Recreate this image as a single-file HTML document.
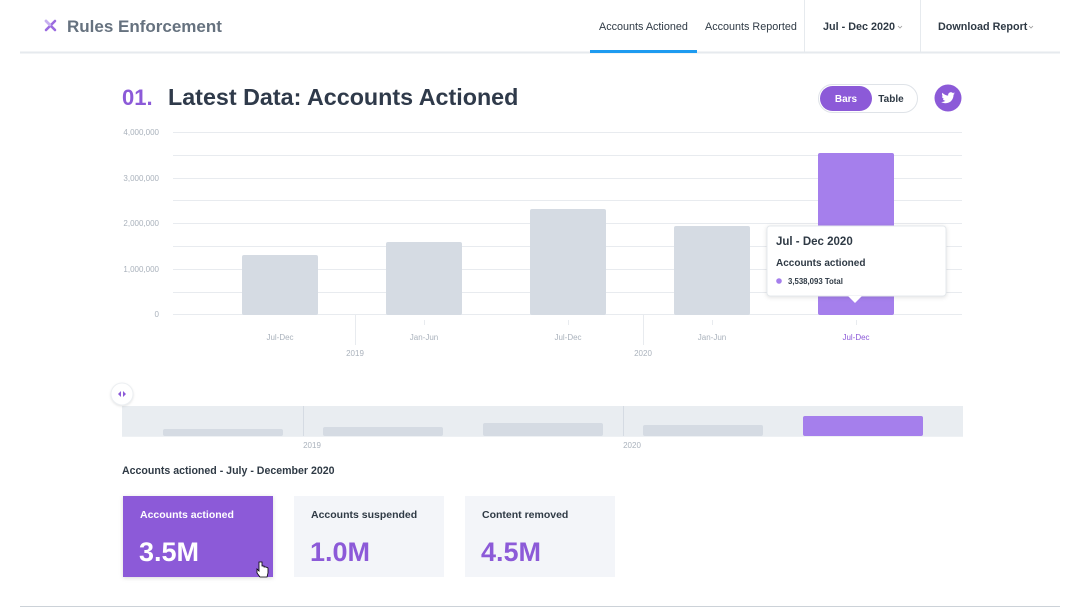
<!DOCTYPE html>
<html><head><meta charset="utf-8"><style>
body{margin:0;width:1080px;height:608px;background:#fff;font-family:"Liberation Sans",Arial,sans-serif;position:relative;overflow:hidden}
.a{position:absolute}
</style></head><body>
<svg class="a" style="left:0;top:0" width="1080" height="608">
<line x1="20" y1="52.5" x2="1060" y2="52.5" stroke="#e6eaee" stroke-width="2"/>
<rect x="590" y="50" width="107" height="3" fill="#1d9bf0"/>
<line x1="804.5" y1="0" x2="804.5" y2="52" stroke="#e6eaee"/>
<line x1="920.5" y1="0" x2="920.5" y2="52" stroke="#e6eaee"/>
<path d="M46 21 L55 30 M55 21 L46 30" stroke="#9b6be0" stroke-width="2.6" stroke-linecap="round"/>
<path d="M46 21 L50 25" stroke="#c7b0f0" stroke-width="2.6" stroke-linecap="round"/>
<text x="67" y="32" font-size="17" font-weight="bold" fill="#66727f">Rules Enforcement</text>
<text x="599" y="30" font-size="10.8" fill="#2f3a45">Accounts Actioned</text>
<text x="705" y="30" font-size="10.8" fill="#2f3a45">Accounts Reported</text>
<text x="823" y="30" font-size="10.8" font-weight="bold" fill="#2f3a45">Jul - Dec 2020</text>
<path d="M898 26 l2 2 l2 -2" stroke="#999" fill="none" stroke-width="0.8"/>
<text x="938" y="30" font-size="10.8" font-weight="bold" fill="#2f3a45">Download Report</text>
<path d="M1029 26 l2 2 l2 -2" stroke="#999" fill="none" stroke-width="0.8"/>
<text x="122" y="105" font-size="22" font-weight="bold" fill="#8c5ad8">01.</text>
<text x="168" y="105" font-size="23.3" font-weight="bold" fill="#2f3a4a">Latest Data: Accounts Actioned</text>
<rect x="818.5" y="84.5" width="99" height="28" rx="14" fill="#fff" stroke="#dfe3e8"/>
<rect x="820" y="86" width="52" height="25" rx="12.5" fill="#8c5ad8"/>
<text x="846" y="102" font-size="10" font-weight="bold" fill="#fff" text-anchor="middle">Bars</text>
<text x="891" y="102" font-size="10" font-weight="bold" fill="#2f3a45" text-anchor="middle">Table</text>
<circle cx="948" cy="98" r="13.5" fill="#8c5ad8"/>
<path d="M955 93.5c-.5.2-1 .4-1.6.4.6-.4 1-.9 1.2-1.5-.5.3-1.100.5-1.7.7-.5-.6-1.2-.9-2-.9-1.500 0-2.800 1.200-2.800 2.800 0 .2 0 .4.1.6-2.300-.1-4.400-1.200-5.800-2.900-.2.4-.4.9-.4 1.400 0 1 .5 1.800 1.200 2.300-.5 0-.9-.1-1.300-.3 0 1.400 1 2.500 2.200 2.700-.4.1-.9.2-1.300.1.4 1.100 1.400 1.900 2.600 1.900-1 .8-2.200 1.200-3.500 1.200h-.7c1.200.8 2.700 1.200 4.300 1.200 5.200 0 8-4.300 8-8v-.4c.6-.4 1-.9 1.400-1.400z" fill="#fff"/>
<g stroke="#e8ebef" stroke-width="1">
<line x1="173" y1="132.5" x2="962" y2="132.5"/><line x1="173" y1="155.5" x2="962" y2="155.5"/>
<line x1="173" y1="178.5" x2="962" y2="178.5"/><line x1="173" y1="200.5" x2="962" y2="200.5"/>
<line x1="173" y1="223.5" x2="962" y2="223.5"/><line x1="173" y1="246.5" x2="962" y2="246.5"/>
<line x1="173" y1="269.5" x2="962" y2="269.5"/><line x1="173" y1="292.5" x2="962" y2="292.5"/>
<line x1="173" y1="314.5" x2="962" y2="314.5"/>
<line x1="355.5" y1="315" x2="355.5" y2="345"/><line x1="643.5" y1="315" x2="643.5" y2="345"/>
<line x1="424.5" y1="320" x2="424.5" y2="325"/><line x1="568.5" y1="320" x2="568.5" y2="325"/><line x1="712.5" y1="320" x2="712.5" y2="325"/><line x1="856.5" y1="320" x2="856.5" y2="325"/>
</g>
<svg x="122" y="120" width="50" height="210"><g font-size="8" fill="#aab2bc" text-anchor="end">
<text x="37" y="15">4,000,000</text><text x="37" y="61">3,000,000</text><text x="37" y="106">2,000,000</text><text x="37" y="152">1,000,000</text><text x="37" y="197">0</text></g></svg>
<g fill="#d5dbe3">
<rect x="242" y="255" width="76" height="60" rx="2"/>
<rect x="386" y="242" width="76" height="73" rx="2"/>
<rect x="530" y="209" width="76" height="106" rx="2"/>
<rect x="674" y="226" width="76" height="89" rx="2"/>
</g>
<rect x="818" y="153" width="76" height="162" rx="2" fill="#a57fec"/>
<g font-size="8" fill="#aab2bc" text-anchor="middle">
<text x="280" y="340">Jul-Dec</text><text x="424" y="340">Jan-Jun</text><text x="568" y="340">Jul-Dec</text><text x="712" y="340">Jan-Jun</text>
<text x="856" y="340" fill="#8c5ad8">Jul-Dec</text>
<text x="355" y="356">2019</text><text x="643" y="356">2020</text>
</g>
<rect x="767" y="226" width="179" height="70" rx="3" fill="#fff" stroke="#e4e8ec" filter="drop-shadow(0 1px 2px rgba(0,0,0,.12))"/>
<path d="M848 296 l7 7 l7 -7z" fill="#fff"/>
<text x="776" y="245" font-size="11.5" font-weight="bold" fill="#2f3a45">Jul - Dec 2020</text>
<text x="776" y="266" font-size="10" font-weight="bold" fill="#2f3a45">Accounts actioned</text>
<circle cx="779" cy="281" r="2.8" fill="#a57fec"/>
<text x="788" y="284" font-size="7.8" font-weight="bold" fill="#2f3a45">3,538,093 Total</text>
<rect x="122" y="406" width="841" height="30" fill="#e9edf1"/>
<line x1="303.5" y1="406" x2="303.5" y2="436" stroke="#d5dbe3"/>
<line x1="623.5" y1="406" x2="623.5" y2="436" stroke="#d5dbe3"/>
<g fill="#d5dbe3"><rect x="163" y="429" width="120" height="7" rx="2"/><rect x="323" y="427" width="120" height="9" rx="2"/><rect x="483" y="423" width="120" height="13" rx="2"/><rect x="643" y="425" width="120" height="11" rx="2"/></g>
<rect x="803" y="416" width="120" height="20" rx="2" fill="#a57fec"/>
<line x1="122" y1="436.5" x2="963" y2="436.5" stroke="#eef1f4"/>
<circle cx="122" cy="394" r="11" fill="#fff" stroke="#eceff2" filter="drop-shadow(0 1px 1px rgba(0,0,0,.1))"/>
<path d="M118 394 l3 -3 v6z M126 394 l-3 -3 v6z" fill="#8c5ad8"/>
<text x="312" y="448" font-size="8" fill="#aab2bc" text-anchor="middle">2019</text>
<text x="632" y="448" font-size="8" fill="#aab2bc" text-anchor="middle">2020</text>
<text x="122" y="474" font-size="10.6" font-weight="bold" fill="#2f3a45">Accounts actioned - July - December 2020</text>
<rect x="123" y="496" width="150" height="81" fill="#8c5ad8" filter="drop-shadow(0 1px 2px rgba(0,0,0,.15))"/>
<rect x="294" y="496" width="150" height="81" fill="#f3f5f9"/>
<rect x="465" y="496" width="150" height="81" fill="#f3f5f9"/>
<text x="140" y="518" font-size="10.5" font-weight="bold" fill="#fff">Accounts actioned</text>
<text x="311" y="518" font-size="10.5" font-weight="bold" fill="#2f3a45">Accounts suspended</text>
<text x="482" y="518" font-size="10.5" font-weight="bold" fill="#2f3a45">Content removed</text>
<text x="139" y="561" font-size="27" font-weight="bold" fill="#fff">3.5M</text>
<text x="310" y="561" font-size="27" font-weight="bold" fill="#8c5ad8">1.0M</text>
<text x="481" y="561" font-size="27" font-weight="bold" fill="#8c5ad8">4.5M</text>
<path d="M259 562 v9 l-2 -2 v4 l3 4 h7 l1 -4 v-5 l-2 -1 l-2 0 v-1 h-2 v-4 z" fill="#fff" stroke="#000" stroke-width="0.8"/>
<line x1="20" y1="606.5" x2="1060" y2="606.5" stroke="#ccd2d8"/>
</svg>
</body></html>
